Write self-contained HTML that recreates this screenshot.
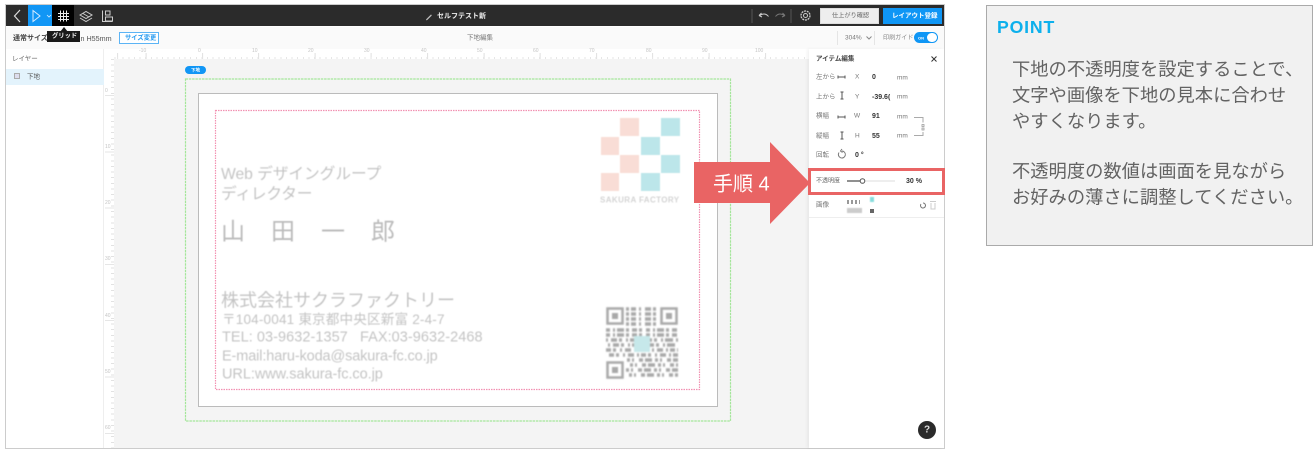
<!DOCTYPE html>
<html lang="ja"><head><meta charset="utf-8"><title>手順4</title>
<style>
html,body{margin:0;padding:0;background:#fff}
body{width:1316px;height:451px;position:relative;overflow:hidden;font-family:"Liberation Sans","Noto Sans CJK JP",sans-serif}
.a{position:absolute;display:block;box-sizing:border-box}
.t{position:absolute;white-space:nowrap;line-height:1;transform:translateY(calc(-50% + .7px))}
.s{font-size:6.5px;color:#777;filter:blur(.25px)}
.b{font-size:7px;color:#333;font-weight:700;filter:blur(.2px)}
.c{color:#c4c4c4;filter:blur(.6px);font-weight:400}
.p{font-size:18.3px;color:#636363;left:1012px;letter-spacing:0}
.r{font-size:5px;color:#c4c4c4}
</style></head><body>
<!-- frame -->
<div class="a" style="left:5px;top:4px;width:940px;height:445px;border:1px solid #ccc;background:#fff"></div>
<!-- topbar -->
<div class="a" style="left:6px;top:5px;width:938px;height:21px;background:#2b2b2b"></div>
<div class="a" style="left:28px;top:5px;width:24px;height:21px;background:#1196f5"></div>
<div class="a" style="left:52px;top:5px;width:22px;height:21px;background:#000"></div>
<svg class="a" style="left:0;top:0" width="960" height="30" fill="none" stroke="#ddd" stroke-width="1">
<path d="M20 10l-5.500 6 5.500 6" stroke-width="1.200"/>
<path d="M33 10.500v11l7-5.500z" stroke="#d8ecff"/>
<path d="M47 15l2 2 2-2" stroke="#d8ecff" stroke-width=".8"/>
<path d="M60.500 10.500v11M63.500 10.500v11M66.500 10.500v11M58 13.500h11M58 16.500h11M58 19.500h11" stroke="#eee"/>
<path d="M80 15l6-3.500 6 3.500-6 3.500zM80 18l6 3.500 6-3.500M83 13.500l6 3.500" stroke="#ccc"/>
<path d="M102.500 10.500v11h10M105.500 11h4.500v4h-4.500zM105.500 17h7v4h-7z" stroke="#ccc"/>
<path d="M431 15l-4 4-.700 1 1-.600 4-4z" stroke="#bbb" stroke-width=".8"/>
<path d="M752 9v14M791 9v14" stroke="#555"/>
<path d="M759 15.500l2.500-2.500M759 15.500l3 1.500M759.500 15.500c4-2.500 7-1.500 9 1" stroke="#ccc"/>
<path d="M785 15.500l-2.500-2.500M785 15.500l-3 1.500M784.500 15.500c-4-2.500-7-1.500-9 1" stroke="#777"/>
<circle cx="805.500" cy="15.500" r="2" stroke="#ccc"/><circle cx="805.500" cy="15.500" r="4.500" stroke="#ccc" stroke-dasharray="2 .8" stroke-width="1.300"/>
</svg>
<span class="t" style="left:437px;top:16px;font-size:7px;font-weight:700;color:#eee">セルフテスト新</span>
<div class="a" style="left:820px;top:8px;width:59px;height:16px;background:#eee;border:1px solid #ddd"></div>
<span class="t" style="left:832px;top:16px;font-size:6.200px;color:#666">仕上がり確認</span>
<div class="a" style="left:883px;top:8px;width:59px;height:16px;background:#0f96f5"></div>
<span class="t" style="left:892px;top:16px;font-size:6.500px;color:#fff;font-weight:700">レイアウト登録</span>
<!-- toolbar -->
<div class="a" style="left:6px;top:27px;width:938px;height:22px;background:#fafafa"></div>
<span class="t b" style="left:13px;top:38px;font-size:7px;color:#444">通常サイズ</span>
<span class="t" style="left:80.500px;top:38px;font-size:7.200px;color:#555;filter:blur(.2px)">n H55mm</span>
<div class="a" style="left:119px;top:32px;width:40px;height:12px;border:1px solid #5cb4f5;background:#fff"></div>
<span class="t" style="left:125px;top:38px;font-size:6.300px;font-weight:700;color:#2b9cf0">サイズ変更</span>
<span class="t s" style="left:467px;top:38px">下地編集</span>
<div class="a" style="left:837px;top:31px;width:1px;height:14px;background:#e5e5e5"></div>
<div class="a" style="left:874px;top:31px;width:1px;height:14px;background:#e5e5e5"></div>
<span class="t s" style="left:845px;top:38px">304%</span>
<svg class="a" style="left:866px;top:36px" width="6" height="4" fill="none" stroke="#888"><path d="M.5.500l2.500 2.500 2.500-2.500"/></svg>
<span class="t s" style="left:883px;top:38px;color:#888;font-size:6.100px">印刷ガイド</span>
<div class="a" style="left:914px;top:32px;width:24px;height:11px;border-radius:6px;background:#0f96f5"></div>
<div class="a" style="left:927px;top:33px;width:10px;height:9px;border-radius:5px;background:#fff"></div>
<span class="t" style="left:918px;top:37.500px;font-size:4px;font-weight:700;color:#fff">ON</span>
<!-- tooltip -->
<svg class="a" style="left:60px;top:27px" width="8" height="5"><path d="M0 5L4 0l4 5z" fill="#1a1a1a"/></svg>
<div class="a" style="left:47px;top:31px;width:33px;height:11px;background:#1a1a1a"></div>
<span class="t" style="left:52px;top:36px;font-size:6.300px;font-weight:700;color:#eee">グリッド</span>
<!-- left panel -->
<div class="a" style="left:6px;top:49px;width:98px;height:399px;background:#fff;border-right:1px solid #eee"></div>
<span class="t s" style="left:12px;top:59px;color:#666">レイヤー</span>
<div class="a" style="left:6px;top:69px;width:98px;height:16px;background:#e3f3fc"></div>
<div class="a" style="left:14px;top:73px;width:6px;height:6px;border:1px solid #aaa;background:#dde"></div>
<span class="t s" style="left:27px;top:77px;color:#555">下地</span>
<!-- ruler -->
<div class="a" style="left:105px;top:49px;width:704px;height:10px;background:#fff"></div>
<div class="a" style="left:105px;top:49px;width:9px;height:399px;background:#fff"></div>
<div class="a" style="left:105px;top:53px;width:704px;height:6px;background-image:repeating-linear-gradient(90deg,#e0e0e0 0 1px,transparent 1px 56.300px);background-position:40.600px 0"></div>
<div class="a" style="left:114px;top:57px;width:695px;height:2px;background-image:repeating-linear-gradient(90deg,#e6e6e6 0 1px,transparent 1px 5.630px);background-position:3px 0"></div>
<div class="a" style="left:105px;top:59px;width:9px;height:389px;background-image:repeating-linear-gradient(180deg,#e6e6e6 0 1px,transparent 1px 56.300px);background-position:0 36px"></div>
<div class="a" style="left:111px;top:59px;width:3px;height:389px;background-image:repeating-linear-gradient(180deg,#e2e2e2 0 1px,transparent 1px 5.630px)"></div>
<span class="t r" style="left:139px;top:51px">-10</span><span class="t r" style="left:198px;top:51px">0</span><span class="t r" style="left:252px;top:51px">10</span><span class="t r" style="left:308px;top:51px">20</span><span class="t r" style="left:364px;top:51px">30</span><span class="t r" style="left:421px;top:51px">40</span><span class="t r" style="left:477px;top:51px">50</span><span class="t r" style="left:533px;top:51px">60</span><span class="t r" style="left:589px;top:51px">70</span><span class="t r" style="left:646px;top:51px">80</span><span class="t r" style="left:702px;top:51px">90</span><span class="t r" style="left:755px;top:51px">100</span>
<span class="t r" style="left:105px;top:91px">0</span><span class="t r" style="left:105px;top:147px">10</span><span class="t r" style="left:105px;top:203px">20</span><span class="t r" style="left:105px;top:259px">30</span><span class="t r" style="left:105px;top:316px">40</span><span class="t r" style="left:105px;top:372px">50</span><span class="t r" style="left:105px;top:428px">60</span>
<!-- canvas -->
<div class="a" style="left:114px;top:59px;width:695px;height:389px;background:#f4f4f4"></div>
<div class="a" style="left:185px;top:66px;width:21px;height:8px;border-radius:4px;background:#1196f5"></div>
<span class="t" style="left:191px;top:69.500px;font-size:4.500px;font-weight:700;color:#fff">下地</span>
<div class="a" style="left:198px;top:93px;width:520px;height:314px;background:#fff;border:1px solid #bbb;border-width:1.500px 1.500px 1.500px 1px"></div>
<svg class="a" style="left:180px;top:74px" width="560" height="354" fill="none">
<rect x="5.500" y="5" width="545" height="342" stroke="#a4e69a" stroke-width="1.200" stroke-dasharray="2.500 .8"/>
<rect x="35.500" y="36.500" width="484" height="279" stroke="#f291b2" stroke-width="1.200" stroke-dasharray="1.500 1"/>
</svg>
<!-- card contents -->
<span class="t c" style="left:221px;top:174px;font-size:15.700px;letter-spacing:-.05px">Web デザイングループ</span>
<span class="t c" style="left:221px;top:194px;font-size:15.700px;letter-spacing:-.2px">ディレクター</span>
<span class="t c" style="left:221px;top:232px;font-size:24px;letter-spacing:26px;color:#bcbcbc">山田一郎</span>
<span class="t c" style="left:221px;top:299.500px;font-size:18px">株式会社サクラファクトリー</span>
<span class="t c" style="left:222px;top:319px;font-size:13.600px;letter-spacing:.15px">〒104-0041 東京都中央区新富 2-4-7</span>
<span class="t c" style="left:222px;top:337px;font-size:14.500px;letter-spacing:.05px">TEL: 03-9632-1357 &nbsp; FAX:03-9632-2468</span>
<span class="t c" style="left:222px;top:355.500px;font-size:14.500px;letter-spacing:-.12px">E-mail:haru-koda@sakura-fc.co.jp</span>
<span class="t c" style="left:222px;top:373.500px;font-size:14.500px;letter-spacing:-.05px">URL:www.sakura-fc.co.jp</span>
<svg class="a" style="left:595px;top:110px;filter:blur(.4px)" width="95" height="90">
<g fill="#f9ddd6"><rect x="25" y="8" width="19" height="18"/><rect x="6" y="27" width="18" height="18"/><rect x="25" y="45" width="19" height="18"/><rect x="6" y="63" width="18" height="18"/></g>
<g fill="#bce6ea"><rect x="66" y="8" width="19" height="18"/><rect x="46" y="27" width="19" height="18"/><rect x="66" y="45" width="19" height="18"/><rect x="46" y="63" width="19" height="18"/></g>
</svg>
<span class="t c" style="left:600px;top:200px;font-size:8px;font-weight:700;letter-spacing:.4px;color:#d4d4d4">SAKURA FACTORY</span>
<!-- QR -->
<svg class="a" style="left:606px;top:307px;filter:blur(.8px)" width="72" height="72" fill="none" stroke="#a8a8a8" stroke-width="3.400">
<path stroke-dasharray="3 2 5 3 2 4 6 2 3 5" d="M20 2h32M20 7h32M20 12h32M20 17h32"/>
<path stroke-dasharray="4 3 2 2 7 2 3 3 5 2 3 4" d="M0 23h72M0 28h72"/>
<path stroke-dasharray="2 3 6 2 3 4 2 2 8 3" d="M0 33h72M2 38h70"/>
<path stroke-dasharray="5 2 3 4 2 3 6 3 2 2" d="M0 43h72M3 48h69"/>
<path stroke-dasharray="3 2 2 5 4 2 7 3" d="M21 53h51M24 58h48M20 63h52M23 68h49"/>
<g stroke-width="2.500"><rect x="1.500" y="1.500" width="15" height="15" fill="#fff"/><rect x="55.500" y="1.500" width="15" height="15" fill="#fff"/><rect x="1.500" y="55.500" width="15" height="15" fill="#fff"/></g>
<g fill="#a8a8a8" stroke="none"><rect x="6" y="6" width="6" height="6"/><rect x="60" y="6" width="6" height="6"/><rect x="6" y="60" width="6" height="6"/><rect x="28" y="29" width="16" height="16" fill="#c6e8ea"/></g>
</svg>
<!-- right panel -->
<div class="a" style="left:809px;top:49px;width:135px;height:399px;background:#fff;box-shadow:-2px 0 3px rgba(0,0,0,.05)"></div>
<span class="t" style="left:816px;top:58.500px;font-size:6.500px;color:#444;font-weight:700;filter:blur(.2px)">アイテム編集</span>
<svg class="a" style="left:931px;top:56px" width="6" height="6" stroke="#333" stroke-width="1"><path d="M.5.500l5 5M5.500.500l-5 5"/></svg>
<span class="t s" style="left:816px;top:77px">左から</span><span class="t s" style="left:816px;top:97px">上から</span><span class="t s" style="left:816px;top:116px">横幅</span><span class="t s" style="left:816px;top:136px">縦幅</span><span class="t s" style="left:816px;top:155px">回転</span>
<span class="t s" style="left:855px;top:77px">X</span><span class="t s" style="left:855px;top:97px">Y</span><span class="t s" style="left:854px;top:116px">W</span><span class="t s" style="left:855px;top:136px">H</span>
<span class="t b" style="left:872px;top:76.500px">0</span><span class="t b" style="left:872px;top:96.500px">-39.6(</span><span class="t b" style="left:872px;top:115.500px">91</span><span class="t b" style="left:872px;top:135.500px">55</span><span class="t b" style="left:855px;top:154.500px">0 °</span>
<span class="t s" style="left:897px;top:77.500px">mm</span><span class="t s" style="left:897px;top:96.500px">mm</span><span class="t s" style="left:897px;top:116.500px">mm</span><span class="t s" style="left:897px;top:135.500px">mm</span>
<svg class="a" style="left:809px;top:49px" width="135" height="175" fill="none" stroke="#555" stroke-width="1">
<path d="M29 28h7M29 26.500v3M36 26.500v3"/>
<path d="M33 43v7M31.500 43h3M31.500 50h3"/><path d="M29 68h7M29 66.500v3M36 66.500v3"/><path d="M33 83v7M31.500 83h3M31.500 90h3"/>
<path d="M105 68.500h9v5M114 83v3.500h-9" stroke="#aaa"/><path d="M113 75.500h2v2h-2zM113 79h2v2h-2z" stroke="#999" stroke-width=".8"/>
<path d="M30 103.500a3.500 3.500 0 1 0 3-1.500M33 100l-1.500 2 2 1.500" stroke="#777"/>
<path d="M38 132h48" stroke="#ddd"/><path d="M38 132h15" stroke="#555" stroke-width="1.300"/><circle cx="53.500" cy="132" r="2.300" fill="#fff"/>
<path d="M112 155a2.500 2.500 0 1 0 2 -1" stroke="#777"/>
<path d="M121 152.500h6M122 154v6h4v-6" stroke="#ccc"/>
</svg>
<span class="t s" style="left:816px;top:181px;color:#666;font-size:6px">不透明度</span>
<span class="t b" style="left:906px;top:180.500px">30 %</span>
<span class="t s" style="left:816px;top:205px">画像</span>
<div class="a" style="left:847px;top:200px;width:13px;height:4px;background:repeating-linear-gradient(90deg,#999 0 2px,transparent 2px 4px);filter:blur(.3px)"></div>
<div class="a" style="left:847px;top:208px;width:15px;height:5px;background:#ccc;filter:blur(.4px)"></div>
<div class="a" style="left:870px;top:197px;width:4px;height:5px;background:#8dd;filter:blur(.4px)"></div>
<div class="a" style="left:870px;top:209px;width:4px;height:4px;background:#666"></div>
<div class="a" style="left:809px;top:217px;width:135px;height:1px;background:#eee"></div>
<div class="a" style="left:918px;top:421px;width:18px;height:18px;border-radius:50%;background:#2b2b2b"></div>
<span class="t" style="left:924px;top:430px;font-size:10px;font-weight:700;color:#ddd">?</span>
<!-- callout -->
<svg class="a" style="left:690px;top:138px" width="125" height="90"><path d="M4 24h76V4l40 41-40 41V65H4z" fill="#e96464"/></svg>
<span class="t" style="left:713px;top:183.500px;font-size:20px;color:#fff;letter-spacing:0">手順 4</span>
<div class="a" style="left:808px;top:168px;width:137px;height:27px;border:3px solid #e96464"></div>
<!-- POINT -->
<div class="a" style="left:986px;top:5px;width:327px;height:241px;background:#f1f1f1;border:1px solid #aaa"></div>
<span class="t" style="left:997px;top:27px;font-size:17.700px;font-weight:700;color:#0db0ec;letter-spacing:.8px">POINT</span>
<span class="t p" style="top:68.500px">下地の不透明度を設定することで、</span>
<span class="t p" style="top:94.800px">文字や画像を下地の見本に合わせ</span>
<span class="t p" style="top:120.500px">やすくなります。</span>
<span class="t p" style="top:170.500px">不透明度の数値は画面を見ながら</span>
<span class="t p" style="top:196.500px">お好みの薄さに調整してください。</span>
</body></html>
